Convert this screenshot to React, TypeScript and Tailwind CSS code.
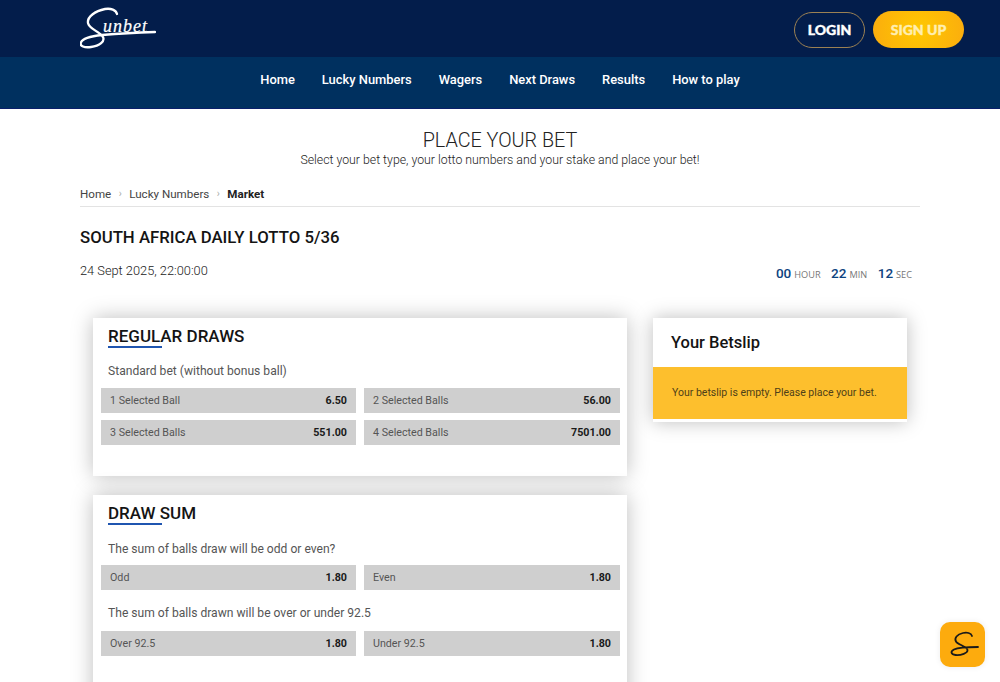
import type { ReactNode } from "react";

const navItems = ["Home", "Lucky Numbers", "Wagers", "Next Draws", "Results", "How to play"];

function Logo() {
  return (
    <div className="relative w-[76px] h-[42px] text-white">
      <svg viewBox="0 0 76 42" fill="none" stroke="currentColor" strokeLinecap="round" strokeLinejoin="round" className="absolute inset-0 w-[76px] h-[42px]">
        <path d="M37 7C36 3 31 1 25 2C15 4 7 10 8 16C9 22 19 24 23 30C25 34 20 39 11 40C4 41 0 39 0.8 36C2 31 12 29 22 28C40 26.5 60 25.5 75 25" strokeWidth="2.3" />
      </svg>
      <span className="absolute left-[23px] top-[9px] text-[18px] leading-[20px] italic font-['Liberation_Serif',serif] tracking-[1px] [-webkit-text-stroke:0.2px_white]">
        unbet
      </span>
    </div>
  );
}

function WidgetMark() {
  return (
    <svg viewBox="0 0 45 45" fill="none" stroke="currentColor" strokeLinecap="round" strokeLinejoin="round" className="w-[45px] h-[45px]">
      <path d="M32 14C31 11 27 10 23 11C17 12.5 14 16 16 19.5C18 23 27 24 27.5 28C28 31 21 33.5 15.5 33C11 32.5 10 29.5 14 27.5C19 25 30 25 38 25" strokeWidth="1.8" />
    </svg>
  );
}

function Odd({ label, value }: { label: string; value: string }) {
  return (
    <div className="h-[25px] bg-[#cfcfcf] flex items-center justify-between px-[9px] text-[10.7px]">
      <span className="text-[#555]">{label}</span>
      <span className="font-bold text-[#1a1a1a]">{value}</span>
    </div>
  );
}

function Card({ title, children, className }: { title: string; children: ReactNode; className?: string }) {
  return (
    <section className={`bg-white shadow-[0_0_20px_rgba(0,0,0,0.26)] pl-[8px] pr-[7px] ${className}`}>
      <div className="pl-[7px] pt-[8px]">
        <h3 className="text-[17px] leading-[20px] font-medium text-[#141414]">{title}</h3>
        <div className="w-[54px] h-[2px] bg-[#1f55b0]" />
      </div>
      {children}
    </section>
  );
}

function Countdown({ value, unit }: { value: string; unit: string }) {
  return (
    <span className="flex items-baseline gap-[3px]">
      <span className="text-[13.5px] font-medium text-[#0d4380]">{value}</span>
      <span className="text-[9.2px] text-[#777] font-['Open_Sans',sans-serif]">{unit}</span>
    </span>
  );
}

export default function App() {
  return (
    <div className="relative h-[682px] overflow-hidden bg-white font-['Roboto',sans-serif]">
      <header className="h-[57px] bg-[#031d4b] flex items-center justify-between pl-[80px] pr-[36px]">
        <div className="mt-[-1px]">
          <Logo />
        </div>
        <div className="flex items-center gap-[8px] mt-[2px]">
          <button className="w-[71px] h-[36px] rounded-full border-[1.5px] border-[#9c8153] text-white text-[14px] font-black font-['Lato',sans-serif] [-webkit-text-stroke:0.4px_white]">
            LOGIN
          </button>
          <button className="w-[91px] h-[37px] rounded-full bg-[radial-gradient(circle,#ffc800,#fbac0e)] text-[#ffeeb0] text-[14px] font-black font-['Lato',sans-serif] [-webkit-text-stroke:0.4px_#ffeeb0]">
            SIGN UP
          </button>
        </div>
      </header>

      <nav className="h-[52px] bg-[#00305f] border-b border-[#0a1f6a] flex justify-center items-start gap-[27px] pt-[14px]">
        {navItems.map((item) => (
          <a key={item} className="text-[12.9px] leading-[17px] font-medium text-white">
            {item}
          </a>
        ))}
      </nav>

      <main className="px-[80px]">
        <div className="pt-[21px] text-center">
          <h1 className="text-[19.8px] leading-[22px] font-light text-[#222]">PLACE YOUR BET</h1>
          <p className="-mt-[1px] text-[12.3px] leading-[18px] font-light text-[#222]">
            Select your bet type, your lotto numbers and your stake and place your bet!
          </p>
        </div>

        <div className="mt-[17px] pb-[4px] border-b border-[#e3e3e3] flex items-center text-[11.6px] leading-[16px] text-[#444]">
          <span>Home</span>
          <span className="mx-[7.5px] text-[#aaa] text-[10px]">›</span>
          <span>Lucky Numbers</span>
          <span className="mx-[7.5px] text-[#aaa] text-[10px]">›</span>
          <span className="font-bold text-[#222]">Market</span>
        </div>

        <h2 className="mt-[20px] text-[16.75px] leading-[20px] font-medium text-[#141414]">SOUTH AFRICA DAILY LOTTO 5/36</h2>

        <div className="mt-[15px] flex items-start justify-between">
          <span className="text-[12.8px] leading-[18px] font-light text-[#222]">24 Sept 2025, 22:00:00</span>
          <div className="flex gap-[10.5px] pr-[8px] mt-[1px]">
            <Countdown value="00" unit="HOUR" />
            <Countdown value="22" unit="MIN" />
            <Countdown value="12" unit="SEC" />
          </div>
        </div>

        <div className="mt-[35px] pl-[13px] pr-[13px] flex items-start gap-[26px]">
          <div className="w-[534px] flex flex-col gap-[19px]">
            <Card title="REGULAR DRAWS" className="h-[158px]">
              <p className="pl-[7px] mt-[15px] text-[12.1px] leading-[16px] text-[#555]">Standard bet (without bonus ball)</p>
              <div className="mt-[9px] grid grid-cols-[255px_256px] gap-x-[8px] gap-y-[7px]">
                <Odd label="1 Selected Ball" value="6.50" />
                <Odd label="2 Selected Balls" value="56.00" />
                <Odd label="3 Selected Balls" value="551.00" />
                <Odd label="4 Selected Balls" value="7501.00" />
              </div>
            </Card>
            <Card title="DRAW SUM" className="h-[220px]">
              <p className="pl-[7px] mt-[16px] text-[12.1px] leading-[16px] text-[#555]">The sum of balls draw will be odd or even?</p>
              <div className="mt-[8px] grid grid-cols-[255px_256px] gap-x-[8px]">
                <Odd label="Odd" value="1.80" />
                <Odd label="Even" value="1.80" />
              </div>
              <p className="pl-[7px] mt-[15px] text-[12.1px] leading-[16px] text-[#555]">The sum of balls drawn will be over or under 92.5</p>
              <div className="mt-[10px] grid grid-cols-[255px_256px] gap-x-[8px]">
                <Odd label="Over 92.5" value="1.80" />
                <Odd label="Under 92.5" value="1.80" />
              </div>
            </Card>
          </div>

          <aside className="w-[254px] bg-white shadow-[0_0_18px_rgba(0,0,0,0.26)] pb-[3px]">
            <h3 className="h-[49px] pl-[18px] pt-[2px] flex items-center text-[16.5px] font-medium text-[#141414]">Your Betslip</h3>
            <div className="h-[52px] bg-[#fdbf2d] pl-[19px] flex items-center text-[10.5px] text-[#4f4018]">
              Your betslip is empty. Please place your bet.
            </div>
          </aside>
        </div>
      </main>

      <button className="absolute left-[940px] top-[622px] w-[45px] h-[45px] rounded-[10px] bg-[#fdab0d] flex items-center justify-center shadow-[0_0_6px_rgba(0,0,0,0.08)] text-[#1a1a1a]">
        <WidgetMark />
      </button>
    </div>
  );
}
